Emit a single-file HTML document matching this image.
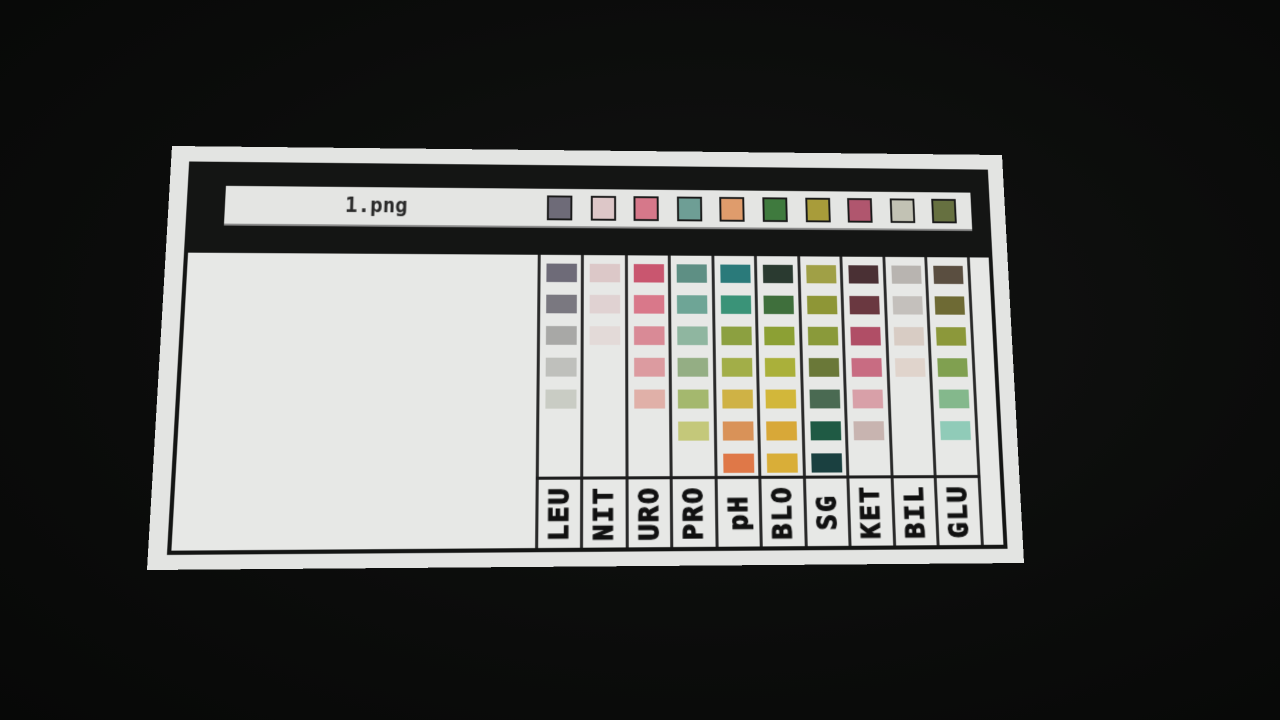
<!DOCTYPE html>
<html><head><meta charset="utf-8"><style>
html,body{margin:0;padding:0}
body{width:1280px;height:720px;overflow:hidden;background:radial-gradient(ellipse at 55% 45%,#121312 0%,#0b0c0b 60%,#070807 100%);position:relative;font-family:"DejaVu Sans Mono","Liberation Mono",monospace}
#card{position:absolute;left:0;top:0;width:860px;height:420px;background:#e3e4e2;transform-origin:0 0;
transform:matrix3d(1.009717,0.017364,0,0.00004451,-0.078617,0.935488,0,-0.00012989,0,0,1,0,172,146,0,1)}
#frame{position:absolute;left:18px;top:16px;width:818px;height:382px;border:4px solid #141514;background:#e7e8e6}
#head{position:absolute;left:0;top:0;width:818px;height:90px;background:#141514}
#bar{position:absolute;left:34px;top:21px;width:768px;height:39px;background:#e4e5e3;border-bottom:2px solid #8a8a8a}
#bar .t{position:absolute;left:120px;top:7px;font-size:21px;font-weight:bold;color:#2a2a2a}
.hs{position:absolute;top:7px;width:22px;height:22px;border:2px solid #1a1a1a;box-sizing:content-box}
.col{position:absolute;top:90px;width:0;height:292px;border-left:3px solid #2a2a2a}
.hl{position:absolute;left:350px;top:313px;width:448px;height:0;border-top:3px solid #1e1e1e}
.sw{position:absolute;width:31px;height:19px}
.lb{position:absolute;top:317px;width:44px;height:65px}
.lb span{position:absolute;left:50%;top:50%;transform:translate(-50%,-50%) rotate(-90deg);font-weight:900;font-size:26px;letter-spacing:2px;color:#111;-webkit-text-stroke:1.2px #111;white-space:nowrap;padding-left:2px}
</style></head><body>
<div id="card"><div id="frame">
<div id="head"><div id="bar"><span class="t">1.png</span>
<div class="hs" style="left:325px;background:#6e6b78"></div>
<div class="hs" style="left:370px;background:#ddc7c8"></div>
<div class="hs" style="left:414px;background:#d6788a"></div>
<div class="hs" style="left:459px;background:#6e9e95"></div>
<div class="hs" style="left:503px;background:#df9c6c"></div>
<div class="hs" style="left:548px;background:#3f7a3e"></div>
<div class="hs" style="left:593px;background:#a89c3a"></div>
<div class="hs" style="left:637px;background:#b0566e"></div>
<div class="hs" style="left:682px;background:#c2c2b4"></div>
<div class="hs" style="left:726px;background:#667040"></div>
</div></div>
<div class="col" style="left:350px"></div>
<div class="col" style="left:394px"></div>
<div class="col" style="left:439px"></div>
<div class="col" style="left:483px"></div>
<div class="col" style="left:528px"></div>
<div class="col" style="left:572px"></div>
<div class="col" style="left:617px"></div>
<div class="col" style="left:661px"></div>
<div class="col" style="left:706px"></div>
<div class="col" style="left:750px"></div>
<div class="col" style="left:795px"></div>
<div class="hl"></div>
<div class="lb" style="left:352px"><span>LEU</span></div>
<div class="lb" style="left:396px"><span>NIT</span></div>
<div class="lb" style="left:441px"><span>URO</span></div>
<div class="lb" style="left:485px"><span>PRO</span></div>
<div class="lb" style="left:530px"><span>pH</span></div>
<div class="lb" style="left:574px"><span>BLO</span></div>
<div class="lb" style="left:619px"><span>SG</span></div>
<div class="lb" style="left:663px"><span>KET</span></div>
<div class="lb" style="left:708px"><span>BIL</span></div>
<div class="lb" style="left:752px"><span>GLU</span></div>

<div class="sw" style="left:359px;top:99px;background:#6e6b78"></div>
<div class="sw" style="left:359px;top:131px;background:#7a7880"></div>
<div class="sw" style="left:359px;top:163px;background:#a8a8a6"></div>
<div class="sw" style="left:359px;top:195px;background:#bfc0bc"></div>
<div class="sw" style="left:359px;top:227px;background:#c9ccc4"></div>
<div class="sw" style="left:403px;top:99px;background:#dcc8c8"></div>
<div class="sw" style="left:403px;top:131px;background:#e0d2d2"></div>
<div class="sw" style="left:403px;top:163px;background:#e3dad8"></div>
<div class="sw" style="left:448px;top:99px;background:#c9566f"></div>
<div class="sw" style="left:448px;top:131px;background:#d9788a"></div>
<div class="sw" style="left:448px;top:163px;background:#d98a96"></div>
<div class="sw" style="left:448px;top:195px;background:#dc9ba0"></div>
<div class="sw" style="left:448px;top:227px;background:#e0b0a8"></div>
<div class="sw" style="left:492px;top:99px;background:#5e8f84"></div>
<div class="sw" style="left:492px;top:131px;background:#6ea596"></div>
<div class="sw" style="left:492px;top:163px;background:#8fb6a0"></div>
<div class="sw" style="left:492px;top:195px;background:#94ae84"></div>
<div class="sw" style="left:492px;top:227px;background:#a4b86e"></div>
<div class="sw" style="left:492px;top:259px;background:#c4c87a"></div>
<div class="sw" style="left:537px;top:99px;background:#2a7a7a"></div>
<div class="sw" style="left:537px;top:131px;background:#3a9378"></div>
<div class="sw" style="left:537px;top:163px;background:#8ca040"></div>
<div class="sw" style="left:537px;top:195px;background:#a2ae48"></div>
<div class="sw" style="left:537px;top:227px;background:#cfb245"></div>
<div class="sw" style="left:537px;top:259px;background:#d99258"></div>
<div class="sw" style="left:537px;top:291px;background:#df7848"></div>
<div class="sw" style="left:581px;top:99px;background:#2a3a30"></div>
<div class="sw" style="left:581px;top:131px;background:#3f6f3c"></div>
<div class="sw" style="left:581px;top:163px;background:#8ca034"></div>
<div class="sw" style="left:581px;top:195px;background:#aab03a"></div>
<div class="sw" style="left:581px;top:227px;background:#d2b73a"></div>
<div class="sw" style="left:581px;top:259px;background:#d8a838"></div>
<div class="sw" style="left:581px;top:291px;background:#d9ae38"></div>
<div class="sw" style="left:626px;top:99px;background:#a0a046"></div>
<div class="sw" style="left:626px;top:131px;background:#8e9636"></div>
<div class="sw" style="left:626px;top:163px;background:#8a9a3a"></div>
<div class="sw" style="left:626px;top:195px;background:#6a7838"></div>
<div class="sw" style="left:626px;top:227px;background:#4a6a52"></div>
<div class="sw" style="left:626px;top:259px;background:#1f5a44"></div>
<div class="sw" style="left:626px;top:291px;background:#1a4040"></div>
<div class="sw" style="left:670px;top:99px;background:#4a3034"></div>
<div class="sw" style="left:670px;top:131px;background:#6a3840"></div>
<div class="sw" style="left:670px;top:163px;background:#b04e66"></div>
<div class="sw" style="left:670px;top:195px;background:#c86c82"></div>
<div class="sw" style="left:670px;top:227px;background:#d8a0a8"></div>
<div class="sw" style="left:670px;top:259px;background:#c8b4b0"></div>
<div class="sw" style="left:715px;top:99px;background:#b8b4b0"></div>
<div class="sw" style="left:715px;top:131px;background:#c4c0bc"></div>
<div class="sw" style="left:715px;top:163px;background:#d8ccc4"></div>
<div class="sw" style="left:715px;top:195px;background:#e0d4cc"></div>
<div class="sw" style="left:759px;top:99px;background:#5a4e40"></div>
<div class="sw" style="left:759px;top:131px;background:#6e6a34"></div>
<div class="sw" style="left:759px;top:163px;background:#8c983a"></div>
<div class="sw" style="left:759px;top:195px;background:#80a050"></div>
<div class="sw" style="left:759px;top:227px;background:#84b88c"></div>
<div class="sw" style="left:759px;top:259px;background:#90cbb8"></div>
</div></div>
</body></html>
